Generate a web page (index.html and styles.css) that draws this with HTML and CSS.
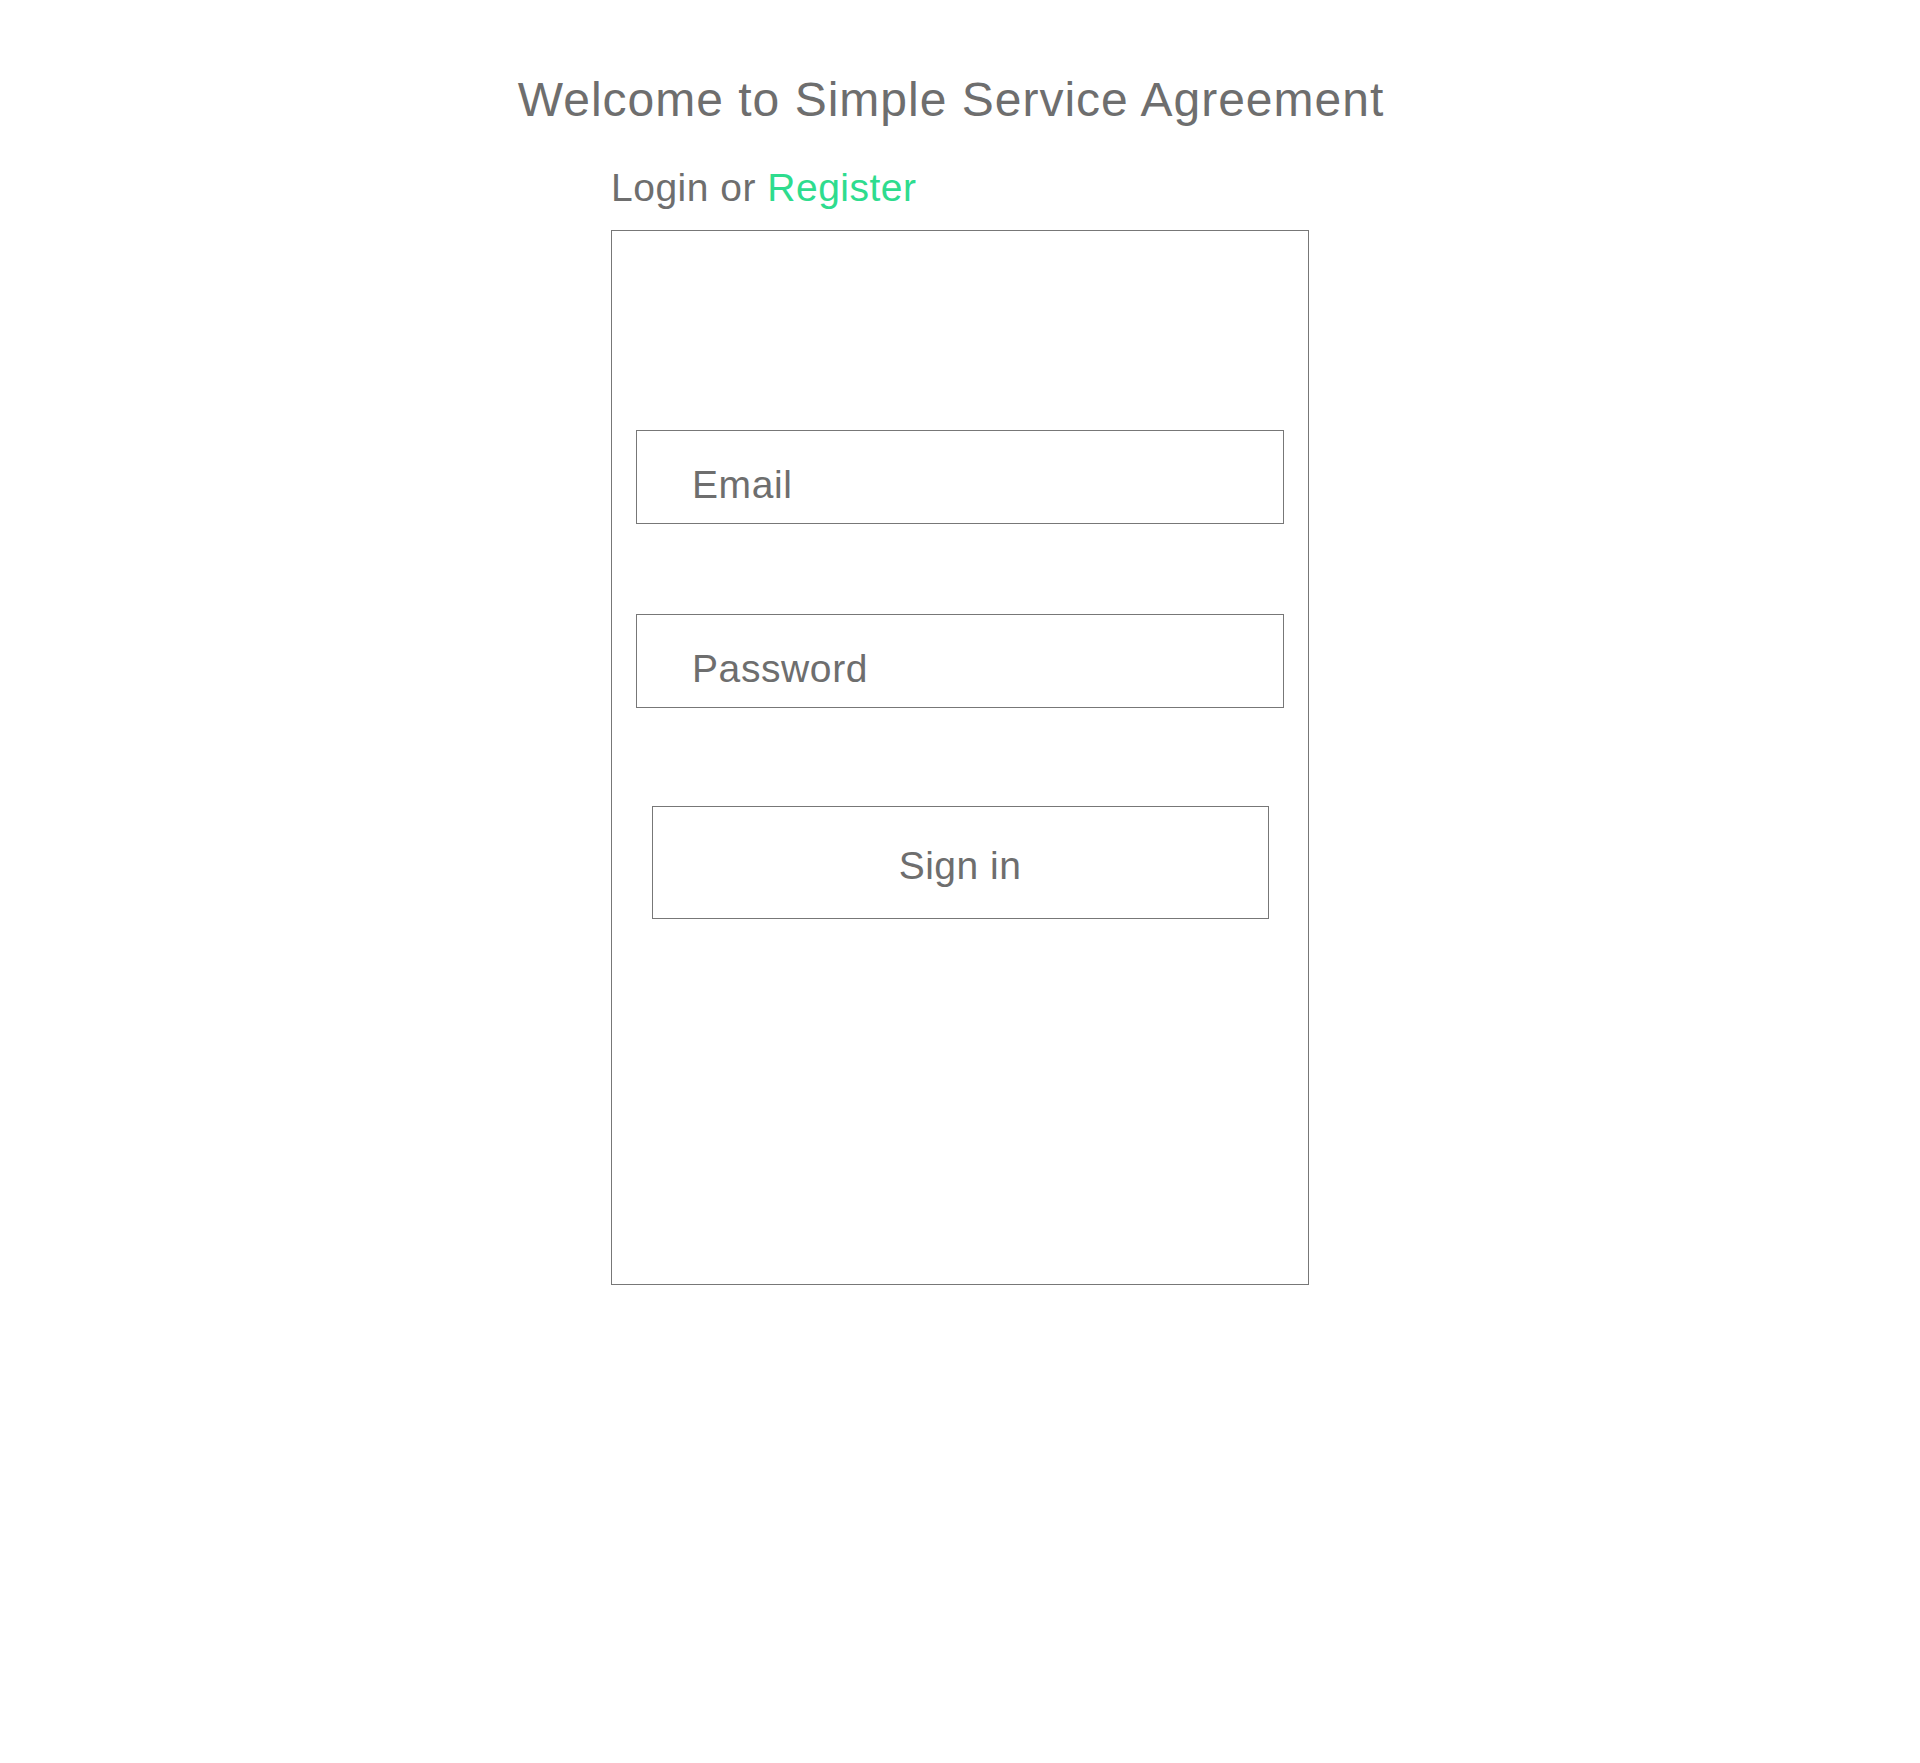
FILE: index.html
```html
<!DOCTYPE html>
<html lang="en">
<head>
<meta charset="utf-8">
<title>Simple Service Agreement</title>
<link rel="stylesheet" href="styles.css">
</head>
<body>
<main class="page">
  <h1 class="title">Welcome to Simple Service Agreement</h1>
  <section class="auth">
    <h2 class="auth-heading">Login or <a class="register-link" href="#">Register</a></h2>
    <form class="login-card" onsubmit="return false;">
      <input class="field field-email" type="email" placeholder="Email">
      <input class="field field-password" type="password" placeholder="Password">
      <button class="signin-btn" type="submit">Sign in</button>
    </form>
  </section>
</main>
</body>
</html>
```

FILE: styles.css
```css
html, body {
  margin: 0;
  padding: 0;
  background: #ffffff;
}

body {
  font-family: "Liberation Sans", Helvetica, Arial, sans-serif;
  color: #6e6e6e;
}

.page {
  display: flex;
  flex-direction: column;
  align-items: center;
}

.title {
  margin: 72px 0 0 0;
  padding-right: 18px;
  font-size: 48px;
  line-height: 56px;
  font-weight: normal;
  letter-spacing: 1px;
  color: #6e6e6e;
}

.auth {
  width: 698px;
  display: flex;
  flex-direction: column;
}

.auth-heading {
  margin: 37px 0 20px 0;
  font-size: 39px;
  line-height: 45px;
  font-weight: normal;
  letter-spacing: 0.5px;
  color: #6e6e6e;
}

.register-link {
  color: #2edc8e;
  text-decoration: none;
}

.login-card {
  box-sizing: border-box;
  width: 698px;
  height: 1055px;
  border: 1px solid #777777;
  padding: 199px 24px 0 24px;
  display: flex;
  flex-direction: column;
  align-items: center;
}

.field {
  box-sizing: border-box;
  width: 648px;
  height: 94px;
  margin: 0;
  padding: 16px 0 0 55px;
  border: 1px solid #777777;
  border-radius: 0;
  background: #ffffff;
  font-family: "Liberation Sans", Helvetica, Arial, sans-serif;
  font-size: 39px;
  letter-spacing: 0.6px;
  color: #6e6e6e;
  outline: none;
}

.field::placeholder {
  color: #6e6e6e;
  opacity: 1;
}

.field-password {
  margin-top: 90px;
}

.signin-btn {
  box-sizing: border-box;
  width: 617px;
  height: 113px;
  margin-top: 98px;
  padding: 7px 0 0 0;
  border: 1px solid #777777;
  border-radius: 0;
  background: #ffffff;
  font-family: "Liberation Sans", Helvetica, Arial, sans-serif;
  font-size: 39px;
  letter-spacing: 0.5px;
  color: #6e6e6e;
  cursor: pointer;
}
```
